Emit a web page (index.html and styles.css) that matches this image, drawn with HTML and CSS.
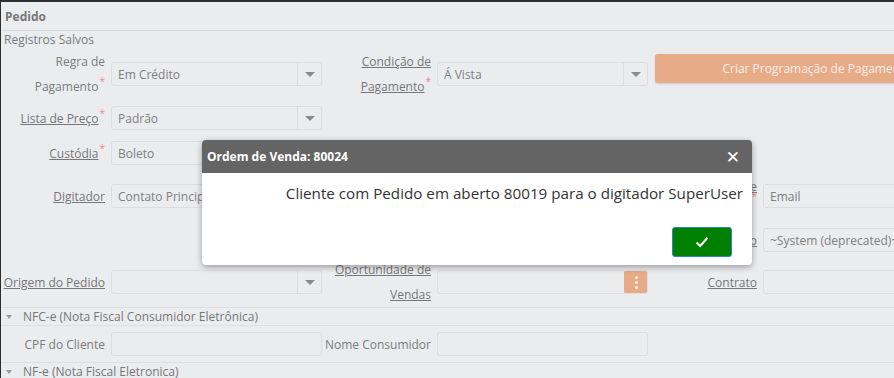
FILE: index.html
```html
<!DOCTYPE html>
<html lang="pt-BR">
<head>
<meta charset="UTF-8">
<title>Pedido</title>
<link rel="stylesheet" href="styles.css">
</head>
<body>
<div class="page">
  <div class="titulo">Pedido</div>
  <div class="salvos">Registros Salvos</div>

  <div class="linha alta">
    <label class="rotulo">Regra de<br>Pagamento<span class="obr">*</span></label>
    <div class="campo select"><span>Em Crédito</span><i class="seta"></i></div>
    <label class="rotulo link">Condição de<br>Pagamento<span class="obr">*</span></label>
    <div class="campo select"><span>Á Vista</span><i class="seta"></i></div>
    <button class="btn-laranja">Criar Programação de Pagamento</button>
  </div>

  <div class="linha l2">
    <label class="rotulo link">Lista de Preço<span class="obr">*</span></label>
    <div class="campo select"><span>Padrão</span><i class="seta"></i></div>
  </div>

  <div class="linha l3">
    <label class="rotulo link">Custódia<span class="obr">*</span></label>
    <div class="campo select"><span>Boleto</span><i class="seta"></i></div>
  </div>

  <div class="linha l4">
    <label class="rotulo link">Digitador</label>
    <div class="campo"><span>Contato Principal</span></div>
    <div></div><div></div>
    <label class="rotulo link compacto">Contato de<br>Cobrança<span class="obr">*</span></label>
    <div class="campo"><span>Email</span></div>
  </div>

  <div class="linha l5">
    <div></div><div></div><div></div><div></div>
    <label class="rotulo link">Usuário Integração</label>
    <div class="campo"><span>~System (deprecated)~</span></div>
  </div>

  <div class="linha alta l6">
    <label class="rotulo link">Origem do Pedido</label>
    <div class="campo select"><span></span><i class="seta"></i></div>
    <label class="rotulo link">Oportunidade de<br>Vendas</label>
    <div class="campo"><span></span><button class="kebab"><i></i><i></i><i></i></button></div>
    <label class="rotulo link">Contrato</label>
    <div class="campo"><span></span></div>
  </div>

  <div class="secao"><i class="tri"></i>NFC-e (Nota Fiscal Consumidor Eletrônica)</div>
  <div class="linha l7">
    <label class="rotulo">CPF do Cliente</label>
    <div class="campo"><span></span></div>
    <label class="rotulo">Nome Consumidor</label>
    <div class="campo"><span></span></div>
  </div>
  <div class="secao ultima"><i class="tri"></i>NF-e (Nota Fiscal Eletronica)</div>
</div>

<div class="modal">
  <div class="modal-topo">
    <span>Ordem de Venda: 80024</span>
    <button class="fechar">&#x2715;</button>
  </div>
  <div class="modal-corpo">Cliente com Pedido em aberto 80019 para o digitador SuperUser</div>
  <div class="modal-rodape">
    <button class="btn-ok">
      <svg width="14" height="12" viewBox="0 0 14 12"><path d="M1.5 6.5 L5.2 10 L12.5 1.8" fill="none" stroke="#fff" stroke-width="2.2"/></svg>
    </button>
  </div>
</div>
</body>
</html>
```

FILE: styles.css
```css
body {
  margin: 0;
  background: #2e2e2e;
  font-family: "Open Sans", "Noto Sans", sans-serif;
  font-size: 12px;
  color: #7a7a7a;
  overflow: hidden;
  width: 894px;
  height: 378px;
}
.page {
  margin: 2px 0 0 1px;
  background: #ebecee;
  height: 376px;
  width: 893px;
  overflow: hidden;
}
.titulo {
  height: 28px;
  line-height: 29px;
  padding-left: 4px;
  font-weight: bold;
  color: #777;
  border-bottom: 1px solid #d6d7d9;
}
.salvos {
  padding-left: 3px;
  line-height: 18px;
  height: 18px;
}
.linha {
  display: grid;
  grid-template-columns: 110px 211px 115px 211px 115px 211px;
  align-items: center;
}
.linha.alta { height: 50px; }
.l2 { height: 38px; }
.l3 { height: 32px; }
.l4 { height: 54px; }
.l5 { height: 34px; }
.l6 { height: 52px; }
.l7 { height: 36px; }
.rotulo {
  text-align: right;
  padding-right: 6px;
  line-height: 25px;
  color: #7c7c7c;
  white-space: nowrap;
  overflow: hidden;
}
.rotulo.compacto {
  line-height: 15px;
  margin-top: -4px;
}
.rotulo.link {
  text-decoration: underline;
  color: #777;
}
.obr {
  color: #ee8a8a;
  font-size: 10px;
  line-height: 0;
  position: relative;
  top: -6px;
  margin-left: 1px;
  display: inline-block;
}
.campo {
  height: 22px;
  border: 1px solid #dcdddf;
  border-radius: 3px;
  display: flex;
  align-items: center;
  position: relative;
  overflow: hidden;
}
.campo span {
  flex: 1;
  padding-left: 6px;
  color: #808080;
  white-space: nowrap;
  overflow: hidden;
}
.select .seta {
  width: 23px;
  height: 100%;
  border-left: 1px solid #dcdddf;
  display: flex;
  align-items: center;
  justify-content: center;
}
.select .seta::after {
  content: "";
  border-left: 5px solid transparent;
  border-right: 5px solid transparent;
  border-top: 5px solid #8a8a8a;
}
.btn-laranja {
  grid-column: 5 / 7;
  margin-left: 7px;
  height: 29px;
  width: 324px;
  border: none;
  border-radius: 3px;
  background: #e8ab88;
  color: #f7efe9;
  font-family: inherit;
  font-size: 12px;
  text-align: center;
  white-space: nowrap;
  padding: 0;
  box-shadow: 0 1px 2px rgba(0,0,0,0.15);
  align-self: start;
  margin-top: 5px;
}
.kebab {
  width: 24px;
  height: 24px;
  margin: -1px -1px -1px 0;
  border: none;
  border-radius: 3px;
  background: #e8ab88;
  display: flex;
  flex-direction: column;
  align-items: center;
  justify-content: center;
  gap: 2px;
  padding: 0;
}
.kebab i {
  width: 3px;
  height: 3px;
  border-radius: 50%;
  background: #f7efe9;
}
.secao {
  height: 17px;
  line-height: 17px;
  border-top: 1px solid #dedfe1;
  border-bottom: 1px solid #dedfe1;
  color: #777;
  display: flex;
  align-items: center;
  padding-left: 5px;
}
.secao.ultima { border-bottom: none; }
.tri {
  width: 0;
  height: 0;
  border-left: 3px solid transparent;
  border-right: 3px solid transparent;
  border-top: 4px solid #9a9a9a;
  margin-right: 11px;
}
.modal {
  position: absolute;
  left: 202px;
  top: 140px;
  width: 550px;
  height: 125px;
  background: #fff;
  border-radius: 4px;
  box-shadow: 0 2px 6px rgba(0,0,0,0.35);
  overflow: hidden;
}
.modal-topo {
  height: 33px;
  background: #646464;
  color: #fff;
  font-weight: bold;
  font-size: 12px;
  display: flex;
  align-items: center;
  justify-content: space-between;
  padding: 0 12px 0 5px;
}
.fechar {
  background: none;
  border: none;
  color: #fff;
  font-size: 17px;
  font-weight: bold;
  padding: 0;
  font-family: "DejaVu Sans", sans-serif;
}
.modal-corpo {
  text-align: right;
  padding: 10px 9px 0 0;
  font-size: 15.2px;
  color: #333;
  height: 32px;
}
.modal-rodape {
  display: flex;
  justify-content: flex-end;
  padding: 12px 20px 0 0;
}
.btn-ok {
  width: 60px;
  height: 30px;
  background: #008000;
  border: 1px solid #2a86c8;
  border-radius: 3px;
  display: flex;
  align-items: center;
  justify-content: center;
  padding: 0;
}
```
